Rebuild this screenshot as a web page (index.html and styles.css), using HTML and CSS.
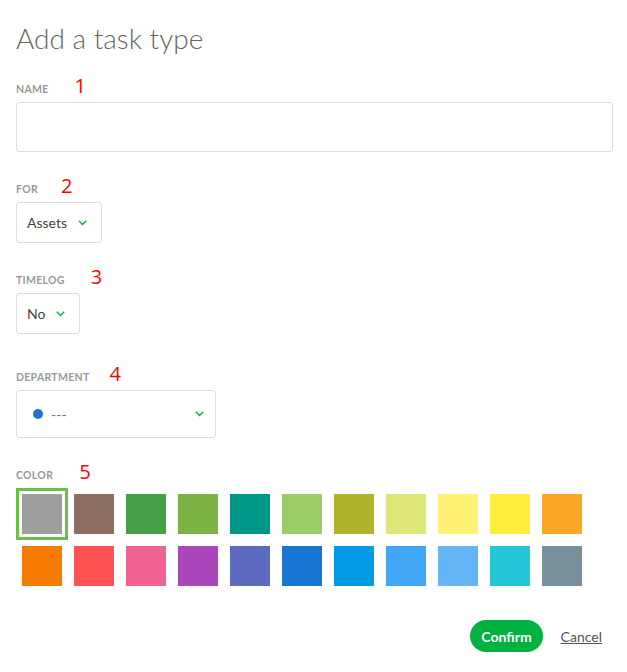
FILE: index.html
```html
<!DOCTYPE html>
<html>
<head>
<meta charset="utf-8">
<link rel="stylesheet" href="styles.css">
</head>
<body>
<div class="modal">
  <h1 class="title">Add a task type</h1>

  <div class="field f-name">
    <div class="label-row"><span class="label">NAME</span><span class="num">1</span></div>
    <div class="input"></div>
  </div>

  <div class="field f-for">
    <div class="label-row"><span class="label">FOR</span><span class="num">2</span></div>
    <div class="select"><span>Assets</span><svg class="chev" width="9" height="6" viewBox="0 0 9 6"><polyline points="0.8,0.8 4.5,4.5 8.2,0.8"/></svg></div>
  </div>

  <div class="field f-timelog">
    <div class="label-row"><span class="label">TIMELOG</span><span class="num">3</span></div>
    <div class="select"><span>No</span><svg class="chev" width="9" height="6" viewBox="0 0 9 6"><polyline points="0.8,0.8 4.5,4.5 8.2,0.8"/></svg></div>
  </div>

  <div class="field f-dept">
    <div class="label-row"><span class="label">DEPARTMENT</span><span class="num">4</span></div>
    <div class="dept">
      <span class="dot"></span><span class="dashes">---</span>
      <svg class="chev" width="9" height="6" viewBox="0 0 9 6"><polyline points="0.8,0.8 4.5,4.5 8.2,0.8"/></svg>
    </div>
  </div>

  <div class="field f-color">
    <div class="label-row"><span class="label">COLOR</span><span class="num">5</span></div>
    <div class="swatches">
      <span class="sw selected"><i style="background:#9e9e9e"></i></span>
      <span class="sw"><i style="background:#8d6e63"></i></span>
      <span class="sw"><i style="background:#43a047"></i></span>
      <span class="sw"><i style="background:#7cb342"></i></span>
      <span class="sw"><i style="background:#009688"></i></span>
      <span class="sw"><i style="background:#9ccc65"></i></span>
      <span class="sw"><i style="background:#afb42b"></i></span>
      <span class="sw"><i style="background:#dce775"></i></span>
      <span class="sw"><i style="background:#fff176"></i></span>
      <span class="sw"><i style="background:#ffeb3b"></i></span>
      <span class="sw"><i style="background:#f9a825"></i></span>
      <span class="sw"><i style="background:#f57c00"></i></span>
      <span class="sw"><i style="background:#ff5252"></i></span>
      <span class="sw"><i style="background:#f06292"></i></span>
      <span class="sw"><i style="background:#ab47bc"></i></span>
      <span class="sw"><i style="background:#5c6bc0"></i></span>
      <span class="sw"><i style="background:#1976d2"></i></span>
      <span class="sw"><i style="background:#039be5"></i></span>
      <span class="sw"><i style="background:#42a5f5"></i></span>
      <span class="sw"><i style="background:#64b5f6"></i></span>
      <span class="sw"><i style="background:#26c6da"></i></span>
      <span class="sw"><i style="background:#78909c"></i></span>
    </div>
  </div>

  <div class="actions">
    <button class="confirm">Confirm</button>
    <a class="cancel">Cancel</a>
  </div>
</div>
</body>
</html>
```

FILE: styles.css
```css
html, body {
  margin: 0;
  padding: 0;
  background: #fff;
}
body {
  font-family: Lato, "Open Sans", sans-serif;
  color: #333;
}
.modal {
  padding: 0 14px 0 16px;
}
.title {
  margin: 0;
  padding-top: 22px;
  font-size: 28px;
  line-height: 32px;
  font-weight: 300;
  color: #666;
}
.field {
  display: flex;
  flex-direction: column;
}
.label-row {
  display: flex;
  align-items: baseline;
  height: 20px;
  margin-bottom: 6px;
}
.label {
  font-size: 10.5px;
  font-weight: 700;
  color: #999;
  letter-spacing: 0.3px;
  line-height: 20px;
}
.num {
  color: #ff0000;
  font-size: 20px;
  line-height: 20px;
  margin-left: 26px;
  font-family: "Open Sans", sans-serif;
}
.f-name { margin-top: 22px; }
.f-for { margin-top: 24px; }
.f-timelog { margin-top: 24px; }
.f-dept { margin-top: 30px; }
.f-color { margin-top: 24px; }

.f-for .num { margin-left: 23px; }
.f-timelog .num { margin-left: 26px; }
.f-dept .num { margin-left: 20px; }

.input {
  height: 48px;
  border: 1px solid #ddd;
  border-radius: 3px;
}
.select {
  align-self: flex-start;
  display: flex;
  align-items: center;
  height: 39px;
  padding: 0 14px 0 10px;
  border: 1px solid #ddd;
  border-radius: 3px;
  font-size: 14px;
  color: #444;
}
.select .chev { margin-left: 11px; }
.chev polyline {
  fill: none;
  stroke: #00b242;
  stroke-width: 1.4;
}
.dept {
  width: 198px;
  height: 46px;
  display: flex;
  align-items: center;
  padding: 0;
  border: 1px solid #ddd;
  border-radius: 3px;
}
.dot {
  width: 10px;
  height: 10px;
  border-radius: 50%;
  background: #1976d2;
  margin-left: 16px;
}
.dashes {
  margin-left: 8px;
  font-size: 14px;
  color: #777;
  flex: 1;
}
.dept .chev { margin-right: 11px; }

.swatches {
  display: grid;
  grid-template-columns: repeat(11, 52px);
  grid-auto-rows: 52px;
  margin-top: 0;
}
.sw {
  display: block;
  padding: 6px;
}
.sw i {
  display: block;
  width: 40px;
  height: 40px;
}
.sw.selected {
  padding: 3px;
  border: 3px solid #6abf4b;
}

.actions {
  display: flex;
  justify-content: flex-end;
  align-items: center;
  margin-top: 28px;
  padding-right: 11px;
}
.confirm {
  height: 32px;
  padding: 0 11px;
  border: none;
  border-radius: 16px;
  background: #00b242;
  color: #fff;
  font-family: Lato, sans-serif;
  font-size: 14px;
  font-weight: 700;
}
.cancel {
  margin-left: 18px;
  font-size: 14px;
  color: #555;
  text-decoration: underline;
}
```
